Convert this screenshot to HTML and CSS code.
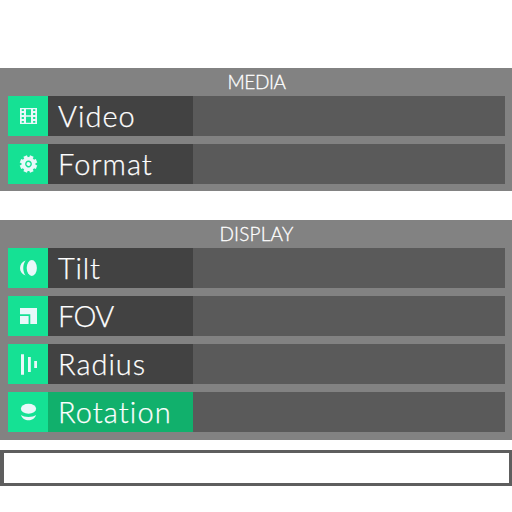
FILE: index.html
```
<!DOCTYPE html>
<html lang="en">
<head>
<meta charset="utf-8">
<title>Settings</title>
<link rel="stylesheet" href="styles.css">
</head>
<body>
<section class="panel media">
  <h2><span class="t-media">MEDIA</span></h2>
  <div class="row"><div class="icon"><svg viewBox="0 0 40 40"><path fill-rule="evenodd" d="M12 12h17v16H12zM18 13.3v5.9h5v-5.9zM18 20.8v5.9h5v-5.9zM13.7 13.2v1.8h2.2v-1.8zM13.7 17v2h2.2v-2zM13.7 21v2h2.2v-2zM13.7 25v1.8h2.2V25zM25.1 13.2v1.8h2.2v-1.8zM25.1 17v2h2.2v-2zM25.1 21v2h2.2v-2zM25.1 25v1.8h2.2V25z"/></svg></div><div class="label"><span class="t-video">Video</span></div><div class="value"></div></div>
  <div class="row"><div class="icon"><svg viewBox="0 0 40 40"><g transform="translate(20.5 20) rotate(22.5)"><circle r="7"/><rect x="-1.9" y="-8.7" width="3.8" height="17.4"/><rect x="-1.9" y="-8.7" width="3.8" height="17.4" transform="rotate(45)"/><rect x="-1.9" y="-8.7" width="3.8" height="17.4" transform="rotate(90)"/><rect x="-1.9" y="-8.7" width="3.8" height="17.4" transform="rotate(135)"/><circle class="ring" r="2.7"/></g></svg></div><div class="label"><span class="t-format">Format</span></div><div class="value"></div></div>
</section>
<section class="panel display">
  <h2><span class="t-display">DISPLAY</span></h2>
  <div class="row"><div class="icon"><svg viewBox="0 0 40 40"><ellipse cx="23.8" cy="20" rx="5.1" ry="7.9"/><path d="M17.6 12.5c-7.4 2.5-7.4 12.6 0 15.1-3.1-4.2-3.1-10.9 0-15.1z"/></svg></div><div class="label"><span class="t-tilt">Tilt</span></div><div class="value"></div></div>
  <div class="row"><div class="icon"><svg viewBox="0 0 40 40"><path d="M12 12h17v16h-6.7v-9.7H12zM12 20h8.6v8H12z"/></svg></div><div class="label"><span class="t-fov">FOV</span></div><div class="value"></div></div>
  <div class="row"><div class="icon"><svg viewBox="0 0 40 40"><path d="M13 10.3h3v20.4h-3zM20 13h2.8v15H20zM26.2 17h2.8v7h-2.8z"/></svg></div><div class="label"><span class="t-radius">Radius</span></div><div class="value"></div></div>
  <div class="row active"><div class="icon"><svg viewBox="0 0 40 40"><ellipse cx="20.5" cy="16.8" rx="7.6" ry="5"/><path d="M13 23c2.8 2.5 12.2 2.5 15 0-2 7-13 7-15 0z"/></svg></div><div class="label"><span class="t-rotation">Rotation</span></div><div class="value"></div></div>
</section>
<div class="field"></div>
</body>
</html>
```
FILE: styles.css
```
* { box-sizing: border-box; }
body { margin: 0; padding-top: 68px; background: #fff; font-family: Lato, sans-serif; font-weight: 300; color: #fff; }
.panel { display: flex; flex-direction: column; gap: 8px; padding: 0 7px 0 8px; background: #828282; }
.media { height: 123px; margin-bottom: 29px; }
.display { height: 220px; margin-bottom: 10px; }
h2 { height: 28px; margin: 0 0 -8px; text-align: center; font-size: 19px; line-height: 27px; font-weight: 300; -webkit-text-stroke: 0.3px #fff; }
.row { display: flex; flex: none; height: 40px; }
.icon { width: 40px; background: #15e194; }
.icon svg { display: block; width: 40px; height: 40px; fill: #e9f8fa; }
.icon .ring { fill: none; stroke: #15e194; stroke-width: 1.4; }
.label { width: 145px; padding-left: 10px; background: #424242; font-size: 29px; line-height: 39px; white-space: nowrap; -webkit-text-stroke: 0.25px #fff; }
.active .label { background: #11b06c; }
.value { flex: 1; background: #5a5a5a; }
.field { height: 36px; border: 3px solid #5e5e5e; border-left-width: 4px; background: #fff; }
.t-media { letter-spacing: -0.4px; }
.t-display { letter-spacing: 0.2px; }
.t-video { letter-spacing: 1px; }
.t-format { letter-spacing: 1px; }
.t-tilt { letter-spacing: 0.8px; }
.t-fov { letter-spacing: -0.7px; }
.t-radius { letter-spacing: 1px; }
.t-rotation { letter-spacing: 1.1px; }
```
